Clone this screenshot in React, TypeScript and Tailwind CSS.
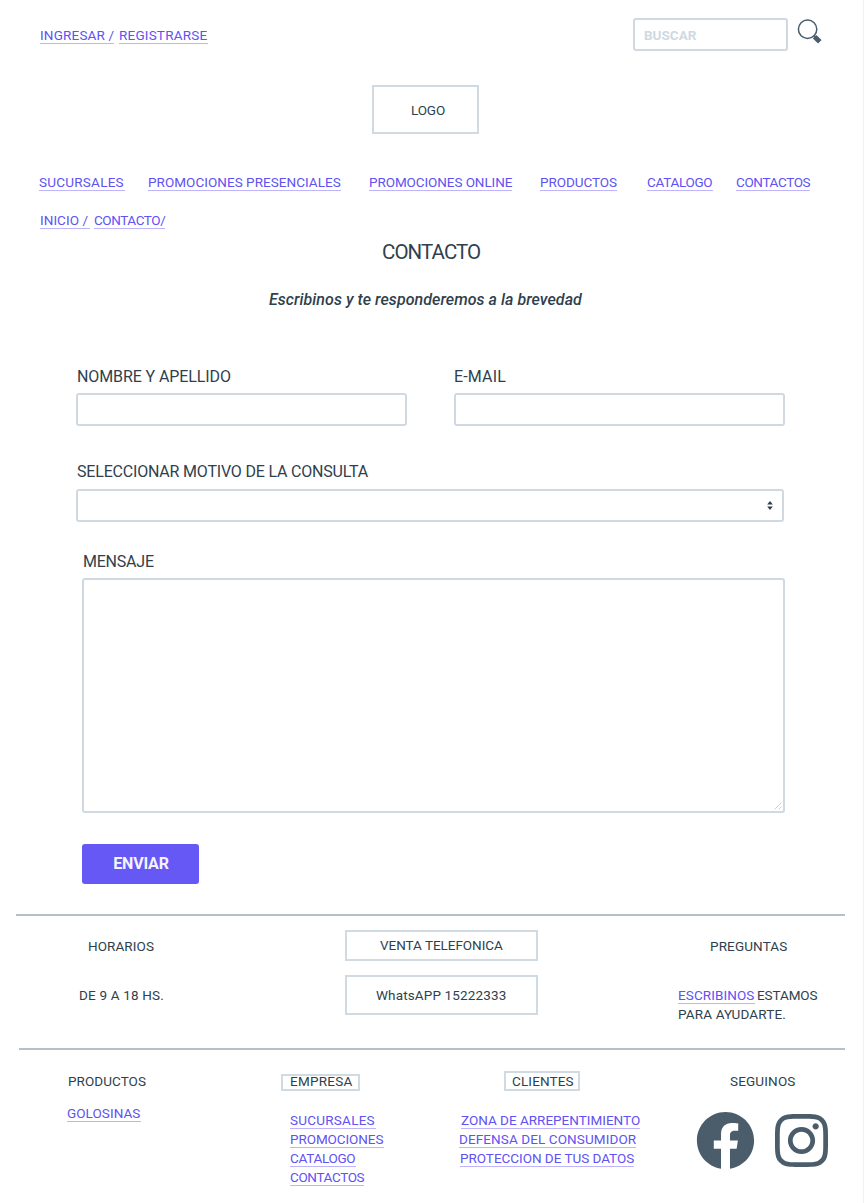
import type { ReactNode } from "react";
import { FaFacebook, FaInstagram } from "react-icons/fa";

function Link({ className, children }: { className: string; children: ReactNode }) {
  return (
    <a
      href="#"
      className={`block h-4 shrink-0 whitespace-pre border-b border-[#bdb4fb] text-[#6052f3] ${className}`}
    >
      {children}
    </a>
  );
}

function Label({ className, children }: { className: string; children: ReactNode }) {
  return <div className={`shrink-0 whitespace-nowrap ${className}`}>{children}</div>;
}

const field = "block border-2 border-[#d0d9e1] rounded-[3px] bg-white outline-none";

export default function App() {
  return (
    <div className="h-[1203px] w-[864px] overflow-hidden border-r border-[#f1f2f3] bg-white font-['Roboto',sans-serif] text-[13.5px] leading-[15px] text-[#2f3f4d]">
      <header>
        <div className="flex h-[85px] items-start pl-10">
          <Link className="mt-7 w-[74px] tracking-[0.18px]">INGRESAR /</Link>
          <Link className="mt-7 ml-[5px] w-[89px] tracking-[0.2px]">REGISTRARSE</Link>
          <input
            placeholder="BUSCAR"
            className={`${field} mt-[18px] ml-[425px] h-[33px] w-[155px] pl-[9px] font-bold placeholder:text-[#ced9e3]`}
          />
          <svg className="mt-[18px] ml-2 h-7 w-7" viewBox="0 0 28 28" fill="none" stroke="#4b5c69">
            <circle cx="11.6" cy="11.3" r="9.2" strokeWidth="1.5" />
            <path d="M17.6 17.4 19.5 19.3" strokeWidth="1.6" />
            <path d="M18.6 18.8 23.8 23.8" strokeWidth="5" />
          </svg>
        </div>
        <div className="ml-[372px] flex h-[49px] w-[107px] items-center border-2 border-[#cfdae3] pl-[37px] pt-[1px] tracking-[-0.15px]">
          LOGO
        </div>
        <nav className="mt-[41px] flex pl-[39px]">
          <Link className="w-[86px] tracking-[0.24px]">SUCURSALES</Link>
          <Link className="ml-[23px] w-[193px] tracking-[0.04px]">PROMOCIONES PRESENCIALES</Link>
          <Link className="ml-7 w-[143px] tracking-[-0.08px]">PROMOCIONES ONLINE</Link>
          <Link className="ml-7 w-[77px] tracking-[-0.07px]">PRODUCTOS</Link>
          <Link className="ml-[30px] w-[66px] tracking-[-0.3px]">CATALOGO</Link>
          <Link className="ml-[23px] w-[74px] tracking-[-0.37px]">CONTACTOS</Link>
        </nav>
        <div className="mt-[22px] flex pl-10">
          <Link className="w-[50px] tracking-[0.05px]">INICIO / </Link>
          <Link className="ml-[4px] w-[71px] tracking-[-0.42px]">CONTACTO/</Link>
        </div>
      </header>

      <main>
        <h1 className="mt-[11px] ml-[382px] text-[20.5px] leading-[24px] tracking-[-0.92px]">CONTACTO</h1>
        <p className="mt-[26px] ml-[269px] text-[16px] leading-5 font-medium italic tracking-[0.05px]">
          Escribinos y te responderemos a la brevedad
        </p>
        <form className="text-[16px] leading-5">
          <div className="mt-[57px] flex gap-[47px] pl-[76px]">
            <div>
              <Label className="pl-[1px] tracking-[-0.1px]">NOMBRE Y APELLIDO</Label>
              <input className={`${field} mt-[6px] h-[33px] w-[331px]`} />
            </div>
            <div>
              <Label className="tracking-[0.15px]">E-MAIL</Label>
              <input className={`${field} mt-[6px] h-[33px] w-[331px]`} />
            </div>
          </div>
          <div className="mt-9 ml-[76px]">
            <Label className="pl-[1px] tracking-[-0.19px]">SELECCIONAR MOTIVO DE LA CONSULTA</Label>
            <button
              type="button"
              aria-label="Seleccionar motivo de la consulta"
              className={`${field} mt-[7px] flex h-[33px] w-[708px] items-center justify-end pr-[9px]`}
            >
              <svg className="h-[9px] w-[6px]" viewBox="0 0 6 9" fill="#2f3f4d">
                <path d="M3 0 5.8 3.6H.2Z" />
                <path d="M3 9 .2 5.4H5.8Z" />
              </svg>
            </button>
          </div>
          <div className="mt-[30px] ml-[82px]">
            <Label className="pl-[1px] tracking-[-0.22px]">MENSAJE</Label>
            <div className={`${field} mt-[6px] flex h-[235px] w-[703px] items-end justify-end pr-px pb-px`}>
              <svg className="h-2 w-2" viewBox="0 0 8 8" stroke="#cbd3da" strokeWidth="1">
                <path d="M.5 7.5 7.5.5M4.5 7.5 7.5 4.5" />
              </svg>
            </div>
            <button
              type="button"
              className="mt-[31px] block h-[40px] w-[117px] rounded-[3px] bg-[#6558f5] pl-px text-center font-bold text-[#f5f3ff] tracking-[-0.2px]"
            >
              ENVIAR
            </button>
          </div>
        </form>
      </main>

      <footer>
        <div className="mt-[30px] ml-4 h-[2px] w-[829px] bg-[#b3c0ca]" />
        <div className="flex h-[132px]">
          <div className="w-[345px] pt-[23px]">
            <Label className="pl-[88px] tracking-[0.08px]">HORARIOS</Label>
            <Label className="mt-[34px] pl-[79px] tracking-[0.17px]">DE 9 A 18 HS.</Label>
          </div>
          <div className="w-[193px] pt-[14px]">
            <Label className="flex h-[31px] items-center border-2 border-[#cfdae3] pl-[33px] tracking-[-0.04px]">
              VENTA TELEFONICA
            </Label>
            <Label className="mt-[14px] flex h-[40px] items-center border-2 border-[#cfdae3] pl-[29px] tracking-[0.14px]">
              WhatsAPP 15222333
            </Label>
          </div>
          <div className="pt-[23px] pl-[140px]">
            <Label className="pl-[32px] tracking-[0.13px]">PREGUNTAS</Label>
            <div className="mt-[34px] flex">
              <Link className="w-[77px] tracking-[0.1px]">ESCRIBINOS</Link>
              <Label className="pl-[2px] tracking-[-0.09px]">ESTAMOS</Label>
            </div>
            <Label className="mt-[3px] tracking-[0.15px]">PARA AYUDARTE.</Label>
          </div>
        </div>
        <div className="ml-[19px] h-[2px] w-[826px] bg-[#b3c0ca]" />
        <div className="flex">
          <div className="w-[281px] pt-6">
            <Label className="pl-[68px] tracking-[0.05px]">PRODUCTOS</Label>
            <Link className="mt-[17px] ml-[67px] w-[74px] tracking-[0.06px]">GOLOSINAS</Link>
          </div>
          <div className="w-[178px] pt-6">
            <Label className="h-[17px] w-[79px] border-2 border-[#cfdae3] pl-[7px] leading-[11px] tracking-[0.25px]">
              EMPRESA
            </Label>
            <div className="mt-[22px] ml-[9px] flex flex-col items-start gap-[3px]">
              <Link className="w-[86px] tracking-[0.24px]">SUCURSALES</Link>
              <Link className="w-[94px] tracking-[-0.08px]">PROMOCIONES</Link>
              <Link className="w-[66px] tracking-[-0.3px]">CATALOGO</Link>
              <Link className="w-[74px] tracking-[-0.37px]">CONTACTOS</Link>
            </div>
          </div>
          <div className="w-[237px] pt-[21px]">
            <Label className="ml-[45px] h-[20px] w-[76px] border-2 border-[#cfdae3] pl-[6px] leading-[17px] tracking-[0.15px]">
              CLIENTES
            </Label>
            <div className="mt-[22px] flex flex-col items-start gap-[3px]">
              <Link className="ml-[2px] w-[179px] tracking-[0px]">ZONA DE ARREPENTIMIENTO</Link>
              <Link className="w-[177px] tracking-[0.1px]">DEFENSA DEL CONSUMIDOR</Link>
              <Link className="ml-[1px] w-[174px] tracking-[-0.03px]">PROTECCION DE TUS DATOS</Link>
            </div>
          </div>
          <div className="pt-6">
            <Label className="pl-[34px] tracking-[0.16px]">SEGUINOS</Label>
            <div className="mt-[21px] flex items-center text-[#4b5c6a]">
              <FaFacebook className="h-[59px] w-[59px]" />
              <FaInstagram className="ml-5 h-[61px] w-[53px]" />
            </div>
          </div>
        </div>
      </footer>
    </div>
  );
}
